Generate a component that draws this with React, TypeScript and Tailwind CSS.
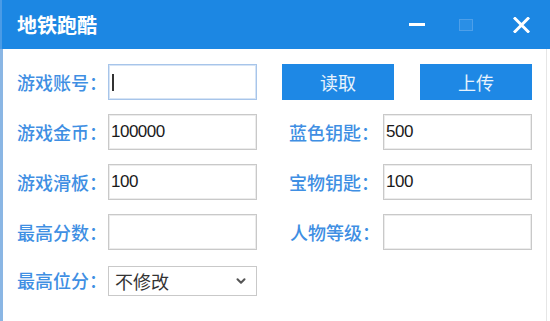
import { ChevronDown } from 'lucide-react';

const cjk = { fontFamily: '"Noto Sans CJK SC", "Noto Sans", sans-serif' };
const num = { fontFamily: '"Liberation Sans", Arial, sans-serif' };

function Label({ text, align = 'start' }: { text: string; align?: 'start' | 'end' }) {
  return (
    <div
      className={`flex h-full items-center text-[18px] font-medium leading-none text-[#3f8fe3] ${align === 'end' ? 'justify-end' : ''}`}
      style={cjk}
    >
      {text}
    </div>
  );
}

function Field({ value, focused }: { value?: string; focused?: boolean }) {
  return (
    <div
      className={`flex h-[36px] w-[149px] items-center border bg-white pl-[2px] ${focused ? 'border-[#a7c5ea] shadow-[inset_0_0_0_1px_#d6e4f5]' : 'border-[#c9c9c9] shadow-[inset_0_0_0_1px_#ececec]'}`}
    >
      {focused && <span className="ml-[1px] h-[17px] w-[2px] bg-[#333]" />}
      {value && (
        <span className="text-[17px] tracking-[-0.5px] text-[#1a1a1a]" style={num}>
          {value}
        </span>
      )}
    </div>
  );
}

function BlueButton({ text }: { text: string }) {
  return (
    <button
      className="flex h-[36px] w-[112px] items-center justify-center bg-[#1e88e5] text-[18px] leading-none text-white/90"
      style={cjk}
    >
      {text}
    </button>
  );
}

export default function App() {
  return (
    <div className="relative flex h-[321px] w-[550px] flex-col overflow-hidden bg-white">
      <div className="flex h-[49px] items-center border-l-[2px] border-[#4a9be6] bg-[#1c87e3]">
        <div className="ml-[15px] text-[20px] font-bold leading-none text-white" style={cjk}>
          地铁跑酷
        </div>
        <div className="ml-auto flex items-center">
          <div className="h-[3px] w-[16px] bg-white" />
          <div className="ml-[34px] h-[12px] w-[14px] border border-[#4d9fe9] bg-[#2a8fe6]" />
          <svg className="ml-[40px] mr-[20px]" width="17" height="16" viewBox="0 0 17 16">
            <path d="M2 1.5 L15 14.5 M15 1.5 L2 14.5" stroke="white" strokeWidth="3" strokeLinecap="square" />
          </svg>
        </div>
      </div>
      <div className="mr-[3px] flex flex-1 border-l-[3px] border-r border-l-[#8ab6e4] border-r-[#e6e6e6] pl-[14px] pt-[15px]">
        <div className="grid grid-cols-[91px_149px_25px_101px_149px] grid-rows-[36px_36px_36px_36px_30px] gap-y-[14px]">
          <Label text="游戏账号：" />
          <Field focused />
          <div />
          <div className="col-span-2 flex justify-between">
            <BlueButton text="读取" />
            <BlueButton text="上传" />
          </div>

          <Label text="游戏金币：" />
          <Field value="100000" />
          <div />
          <div className="pl-[7px]">
            <Label text="蓝色钥匙：" />
          </div>
          <Field value="500" />

          <Label text="游戏滑板：" />
          <Field value="100" />
          <div />
          <div className="pl-[7px]">
            <Label text="宝物钥匙：" />
          </div>
          <Field value="100" />

          <Label text="最高分数：" />
          <Field />
          <div />
          <div className="pl-[8px]">
            <Label text="人物等级：" />
          </div>
          <Field />

          <div className="mt-[2px]">
            <Label text="最高位分：" />
          </div>
          <div className="mt-[2px] flex h-[30px] w-[149px] items-center justify-between border border-[#c9c9c9] bg-white pl-[6px] pr-[8px]">
            <span className="text-[18px] leading-none text-[#333]" style={cjk}>
              不修改
            </span>
            <ChevronDown size={14} strokeWidth={3.5} className="text-[#555]" />
          </div>
        </div>
      </div>
    </div>
  );
}
